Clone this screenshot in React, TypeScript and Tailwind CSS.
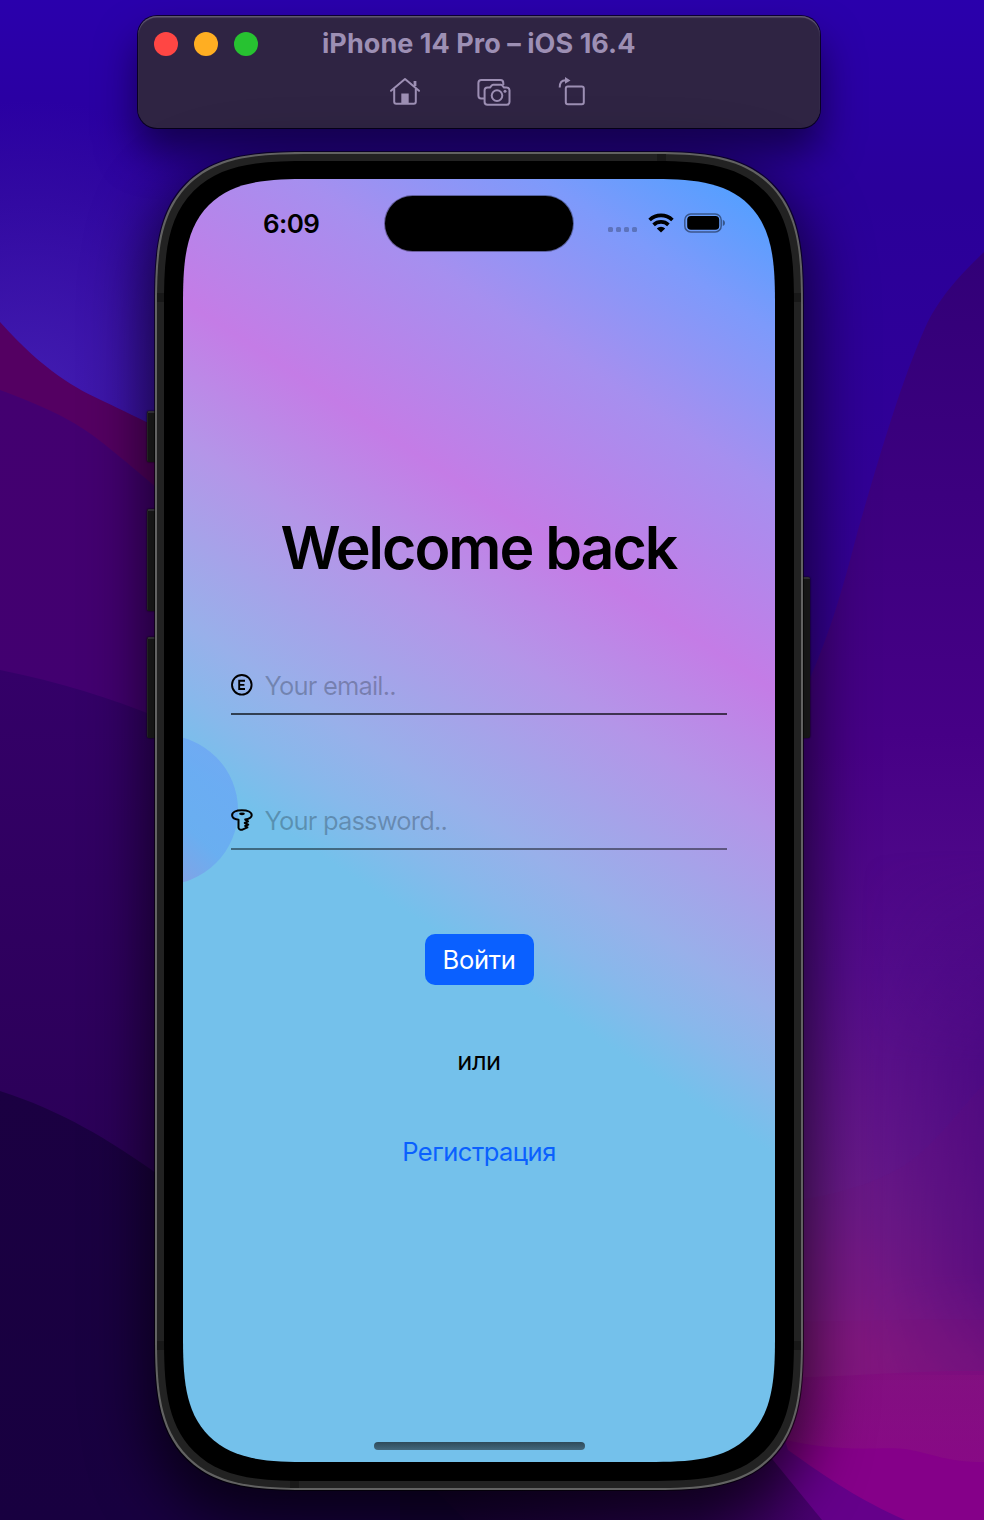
import type { ReactNode } from "react";

function Wallpaper() {
  return (
    <svg className="absolute inset-0 h-full w-full" viewBox="0 0 984 1520" preserveAspectRatio="none" aria-hidden="true">
      <defs>
        <linearGradient id="sky" x1="0" y1="0" x2="0" y2="1">
          <stop offset="0" stopColor="#2a00ac" />
          <stop offset="0.13" stopColor="#2a009a" />
          <stop offset="0.5" stopColor="#380092" />
        </linearGradient>
        <radialGradient id="skyGlow" gradientUnits="userSpaceOnUse" cx="30" cy="400" r="300">
          <stop offset="0" stopColor="#4420b4" stopOpacity="0.9" />
          <stop offset="1" stopColor="#4420b4" stopOpacity="0" />
        </radialGradient>
        <linearGradient id="left" gradientUnits="userSpaceOnUse" x1="0" y1="390" x2="0" y2="720">
          <stop offset="0" stopColor="#430070" />
          <stop offset="1" stopColor="#420070" />
        </linearGradient>
        <linearGradient id="leftLow" gradientUnits="userSpaceOnUse" x1="0" y1="670" x2="0" y2="1150">
          <stop offset="0" stopColor="#340068" />
          <stop offset="1" stopColor="#2b0058" />
        </linearGradient>
        <linearGradient id="base" gradientUnits="userSpaceOnUse" x1="0" y1="1090" x2="0" y2="1520">
          <stop offset="0" stopColor="#1b0042" />
          <stop offset="1" stopColor="#180040" />
        </linearGradient>
        <linearGradient id="right" gradientUnits="userSpaceOnUse" x1="0" y1="255" x2="0" y2="1450">
          <stop offset="0" stopColor="#320078" />
          <stop offset="0.4" stopColor="#460086" />
          <stop offset="0.6" stopColor="#530c8a" />
          <stop offset="0.8" stopColor="#6a1b88" />
          <stop offset="0.92" stopColor="#821b84" />
          <stop offset="1" stopColor="#8b1286" />
        </linearGradient>
        <linearGradient id="edge" gradientUnits="userSpaceOnUse" x1="984" y1="0" x2="860" y2="0">
          <stop offset="0" stopColor="#3a007c" stopOpacity="0.45" />
          <stop offset="1" stopColor="#3a007c" stopOpacity="0" />
        </linearGradient>
        <linearGradient id="edgeFade" gradientUnits="userSpaceOnUse" x1="0" y1="850" x2="0" y2="1380">
          <stop offset="0" stopColor="#fff" stopOpacity="0" />
          <stop offset="0.4" stopColor="#fff" />
          <stop offset="0.8" stopColor="#fff" />
          <stop offset="1" stopColor="#fff" stopOpacity="0.5" />
        </linearGradient>
        <mask id="edgeMask">
          <rect x="800" y="850" width="184" height="525" fill="url(#edgeFade)" />
        </mask>
        <linearGradient id="fold" gradientUnits="userSpaceOnUse" x1="440" y1="0" x2="810" y2="0">
          <stop offset="0" stopColor="#180038" />
          <stop offset="0.7" stopColor="#2a0050" />
          <stop offset="1" stopColor="#48006e" />
        </linearGradient>
        <linearGradient id="magenta" gradientUnits="userSpaceOnUse" x1="984" y1="1280" x2="984" y2="1460">
          <stop offset="0" stopColor="#7c1078" />
          <stop offset="1" stopColor="#850484" />
        </linearGradient>
      </defs>
      <rect width="984" height="1520" fill="url(#sky)" />
      <rect width="480" height="700" fill="url(#skyGlow)" />
      <path d="M0 322C45 372 75 388 105 402S190 444 250 474V800H0Z" fill="#540062" />
      <path d="M0 390C40 405 70 418 95 437S150 482 200 525V900H0Z" fill="url(#left)" />
      <path d="M0 670C60 682 110 698 160 718L300 780V1300H0Z" fill="url(#leftLow)" />
      <path d="M0 1091C60 1110 110 1140 160 1176L480 1420V1520H0Z" fill="url(#base)" />
      <path d="M984 252C955 280 938 300 925 328C900 385 880 455 858 530C845 580 832 630 805 690L740 800V1520H984Z" fill="url(#right)" />
      <rect x="800" y="850" width="184" height="525" fill="url(#edge)" mask="url(#edgeMask)" />
      <path d="M984 1084C955 1115 935 1145 905 1165C880 1180 850 1192 800 1200V1380H984Z" fill="#7a1070" opacity="0.08" />
      <path d="M740 1321C850 1323 900 1318 984 1320V1380H740Z" fill="#801070" opacity="0.15" />
      <path d="M740 1378C850 1378 900 1370 984 1371V1520H740Z" fill="url(#magenta)" opacity="0.6" />
      <path d="M400 1440H785C850 1454 880 1446 905 1449C935 1454 945 1462 984 1462V1520H400Z" fill="#850089" />
      <path d="M400 1440H785L788 1450C830 1480 860 1500 905 1520H400Z" fill="#65008a" />
      <path d="M400 1440H755L773 1460L822 1520H400Z" fill="url(#fold)" />
      <path d="M400 1440L430 1485L465 1520H400Z" fill="#150038" />
    </svg>
  );
}

function HomeIcon() {
  return (
    <svg className="h-8 w-8" viewBox="0 0 32 32" fill="none" stroke="#9d8fb4" strokeWidth="2" strokeLinecap="round" strokeLinejoin="round">
      <path d="M2 14.8L16 3.1L30 14.8" />
      <path d="M5.2 13.3V25.8Q5.2 27.8 7.2 27.8H24.8Q26.8 27.8 26.8 25.8V13.3" />
      <path d="M26 5V10" strokeWidth="2.8" strokeLinecap="butt" />
      <path d="M12.3 27.3V17.5H19.7V27.3Z" fill="#9d8fb4" stroke="none" />
    </svg>
  );
}

function ScreenshotIcon() {
  return (
    <svg className="h-8 w-[34px]" viewBox="0 0 34 32" fill="none" stroke="#9d8fb4" strokeWidth="2" strokeLinejoin="round">
      <path d="M7 22.5H4Q1.4 22.5 1.4 19.5V7Q1.4 4 4.4 4H23.5Q26.3 4 26.3 7V9" />
      <path d="M10.5 11.5H13L15 9.2Q15.5 8.8 16.2 8.8H23.8Q24.5 8.8 25 9.2L27 11.5H29.5Q32.5 11.5 32.5 14.3V26Q32.5 28.8 29.5 28.8H10.5Q7.6 28.8 7.6 26V14.3Q7.6 11.5 10.5 11.5Z" />
      <circle cx="20" cy="19.6" r="5.3" />
      <circle cx="28" cy="15.2" r="1.5" fill="#9d8fb4" stroke="none" />
    </svg>
  );
}

function RotateIcon() {
  return (
    <svg className="h-8 w-8" viewBox="0 0 32 32" fill="none" stroke="#9d8fb4" strokeWidth="2">
      <rect x="9.8" y="10.5" width="18" height="17.8" rx="2" />
      <path d="M3.7 11.5C3.7 7 5.5 4.3 9.5 4.3" />
      <path d="M9 1L14.5 4.4L9 7.8Z" fill="#9d8fb4" stroke="none" />
    </svg>
  );
}

function TitleBar() {
  return (
    <header className="relative ml-[138px] mt-4 h-28 w-[682px] rounded-[19px] bg-[#2f2443] shadow-[0_0_0_1px_rgba(0,0,0,0.7),inset_0_1.5px_1px_rgba(255,255,255,0.25),0_24px_40px_rgba(0,0,0,0.5)]">
      <div className="flex h-[55px] items-center pl-4">
        <div className="flex w-[168px] gap-4">
          <span className="h-6 w-6 rounded-full bg-[#ff4644]" />
          <span className="h-6 w-6 rounded-full bg-[#ffae22]" />
          <span className="h-6 w-6 rounded-full bg-[#27c231]" />
        </div>
        <h1 className="whitespace-nowrap text-[27px] font-bold leading-10 tracking-[0.05px] text-[#9d8fb4]">iPhone 14 Pro – iOS 16.4</h1>
      </div>
      <div className="flex pl-[251px] pt-[5px]">
        <HomeIcon />
        <span className="ml-14">
          <ScreenshotIcon />
        </span>
        <span className="ml-[45px]">
          <RotateIcon />
        </span>
      </div>
    </header>
  );
}

function StatusBar() {
  return (
    <div className="flex h-[72px] items-start pl-20 pt-[17px]">
      <span className="mt-[10px] w-[122px] text-[26px] font-semibold leading-9 tracking-[-0.6px]">6:09</span>
      <span className="h-[55px] w-[188px] rounded-full bg-black shadow-[0_0_0_1px_rgba(0,0,0,0.35)]" />
      <span className="ml-[35px] mt-[31px] flex gap-[3px]">
        <i className="h-[5px] w-[5px] rounded-[1.5px] bg-black/25" />
        <i className="h-[5px] w-[5px] rounded-[1.5px] bg-black/25" />
        <i className="h-[5px] w-[5px] rounded-[1.5px] bg-black/25" />
        <i className="h-[5px] w-[5px] rounded-[1.5px] bg-black/25" />
      </span>
      <svg className="ml-[11px] mt-[17px] h-5 w-[26px]" viewBox="0 0 26 20" fill="none" stroke="#000" strokeWidth="3.7">
        <path d="M1.6 7A16.6 16.6 0 0 1 24.4 7" />
        <path d="M5.6 11.8A10.8 10.8 0 0 1 20.4 11.8" />
        <path d="M13 19.4L8.8 15.4A6 6 0 0 1 17.2 15.4Z" fill="#000" stroke="none" />
      </svg>
      <svg className="ml-[10px] mt-[17px] h-5 w-[42px]" viewBox="0 0 42 20">
        <rect x="0.8" y="0.9" width="36.4" height="18" rx="6" fill="none" stroke="#000" strokeOpacity="0.45" strokeWidth="1.5" />
        <rect x="3.2" y="3" width="32" height="13.8" rx="3.8" />
        <path d="M38.8 6.7Q41 7.6 41 9.9T38.8 13Z" fillOpacity="0.45" />
      </svg>
    </div>
  );
}

function EmailIcon() {
  return (
    <svg className="h-[22px] w-[22px]" viewBox="0 0 22 22" fill="none" stroke="#000">
      <circle cx="10.8" cy="10.8" r="9.8" strokeWidth="1.9" />
      <path d="M14 6.8H8.2V15H14M8.2 10.9H13.4" strokeWidth="1.9" />
    </svg>
  );
}

function KeyIcon() {
  return (
    <svg className="h-[22px] w-[22px]" viewBox="0 0 22 22" fill="none" stroke="#000" strokeWidth="2" strokeLinejoin="round">
      <path d="M7.5 10.8C3.6 10.2 1.1 8.5 1.1 6.2C1.1 3.3 5 1.3 10.9 1.3S20.7 3.3 20.7 6.2C20.7 8.2 18 9.8 14.2 10.6L17 12.4L13.8 14L17.2 15.7L14.2 17L16.4 18.4L12 20.4Q10.4 21.2 9 20.6Q7.5 20 7.5 18.8Z" />
      <ellipse cx="11" cy="4.8" rx="2.9" ry="1.4" fill="#000" stroke="none" />
    </svg>
  );
}

function Field({ icon, children }: { icon: ReactNode; children: string }) {
  return (
    <div className="flex h-[58px] items-center gap-[11.5px] pt-[2px]">
      {icon}
      <span className="pt-[2px] text-[25.5px] leading-8 tracking-[-0.82px] text-black/25">{children}</span>
    </div>
  );
}

function Screen() {
  return (
    <main className="relative h-[1283px] w-[592px] overflow-hidden rounded-[127px] bg-[linear-gradient(213.4deg,#559fff_30px,#7d9afb_128px,#a68fef_262px,#c47ce6_427px,#b495e8_543px,#98b0ea_696px,#88b8eb_756px,#74c1eb_815px)] [corner-shape:superellipse(1.6)]">
      <div className="absolute left-[-95px] top-[556px] h-[150px] w-[150px] rounded-full bg-[linear-gradient(223deg,#6298fa_25%,#5f9cf6_48%,#8a86e2_68%,#74b0e8_88%)] opacity-50" />
      <div className="relative flex h-full flex-col">
        <StatusBar />
        <h2 className="mt-[257px] h-20 whitespace-nowrap pr-px text-center text-[59px] font-semibold leading-[80px] tracking-[-2px]">Welcome back</h2>
        <div className="mt-[67px] flex flex-col px-12">
          <div className="border-b-2 border-black/65">
            <Field icon={<EmailIcon />}>Your email..</Field>
          </div>
          <div className="mt-[75px] border-b-2 border-black/45">
            <Field icon={<KeyIcon />}>Your password..</Field>
          </div>
        </div>
        <div className="flex flex-col items-center text-[25.5px] leading-8">
          <button className="mt-[84px] h-[51px] w-[109px] rounded-[10px] bg-[#0a60ff] tracking-[-0.3px] text-white">Войти</button>
          <span className="mt-[60px] tracking-[-0.5px]">или</span>
          <a className="mt-[59px] tracking-[-0.5px] text-[#0a60ff]">Регистрация</a>
        </div>
        <div className="mb-3 mt-auto flex justify-center pl-px">
          <span className="h-2 w-[211px] rounded-full bg-linear-to-b from-[#2e4a5a] to-[#43687d]" />
        </div>
      </div>
    </main>
  );
}

function Phone() {
  const button = "absolute w-[9px] rounded-[2px] border-t-2 border-l border-[#333] border-t-[#4a4650] bg-[#222] shadow-[0_0_2px_#000]";
  const band = "absolute bg-[#181818]";
  return (
    <section className="relative ml-[155px] mt-6 h-[1338px] w-[648px]">
      <div className={`${button} left-[-8px] top-[259px] h-[51px]`} />
      <div className={`${button} left-[-8px] top-[357px] h-[102px]`} />
      <div className={`${button} left-[-8px] top-[485px] h-[101px]`} />
      <div className={`${button} right-[-7px] top-[425px] h-[161px]`} />
      <div className="relative h-full w-full rounded-[155px] border-2 border-[#626262] bg-[#222] p-[7px] shadow-[0_0_0_1px_rgba(0,0,0,0.6),0_24px_60px_8px_rgba(0,0,0,0.65)] [corner-shape:superellipse(1.6)]">
        <span className={`${band} left-0 top-[139px] h-[9px] w-2`} />
        <span className={`${band} right-0 top-[139px] h-[9px] w-2`} />
        <span className={`${band} left-0 top-[1187px] h-[9px] w-2`} />
        <span className={`${band} right-0 top-[1187px] h-[9px] w-2`} />
        <span className={`${band} left-[500px] top-0 h-2 w-[9px]`} />
        <span className={`${band} bottom-0 left-[133px] h-2 w-[9px]`} />
        <div className="relative h-full w-full rounded-[146px] bg-black px-[19px] pt-[18px] [corner-shape:superellipse(1.6)]">
          <Screen />
        </div>
      </div>
    </section>
  );
}

export default function App() {
  return (
    <div className="relative flex h-[1520px] w-[984px] flex-col overflow-hidden bg-[#1b0042] font-[Inter,sans-serif] text-black">
      <Wallpaper />
      <TitleBar />
      <Phone />
    </div>
  );
}
